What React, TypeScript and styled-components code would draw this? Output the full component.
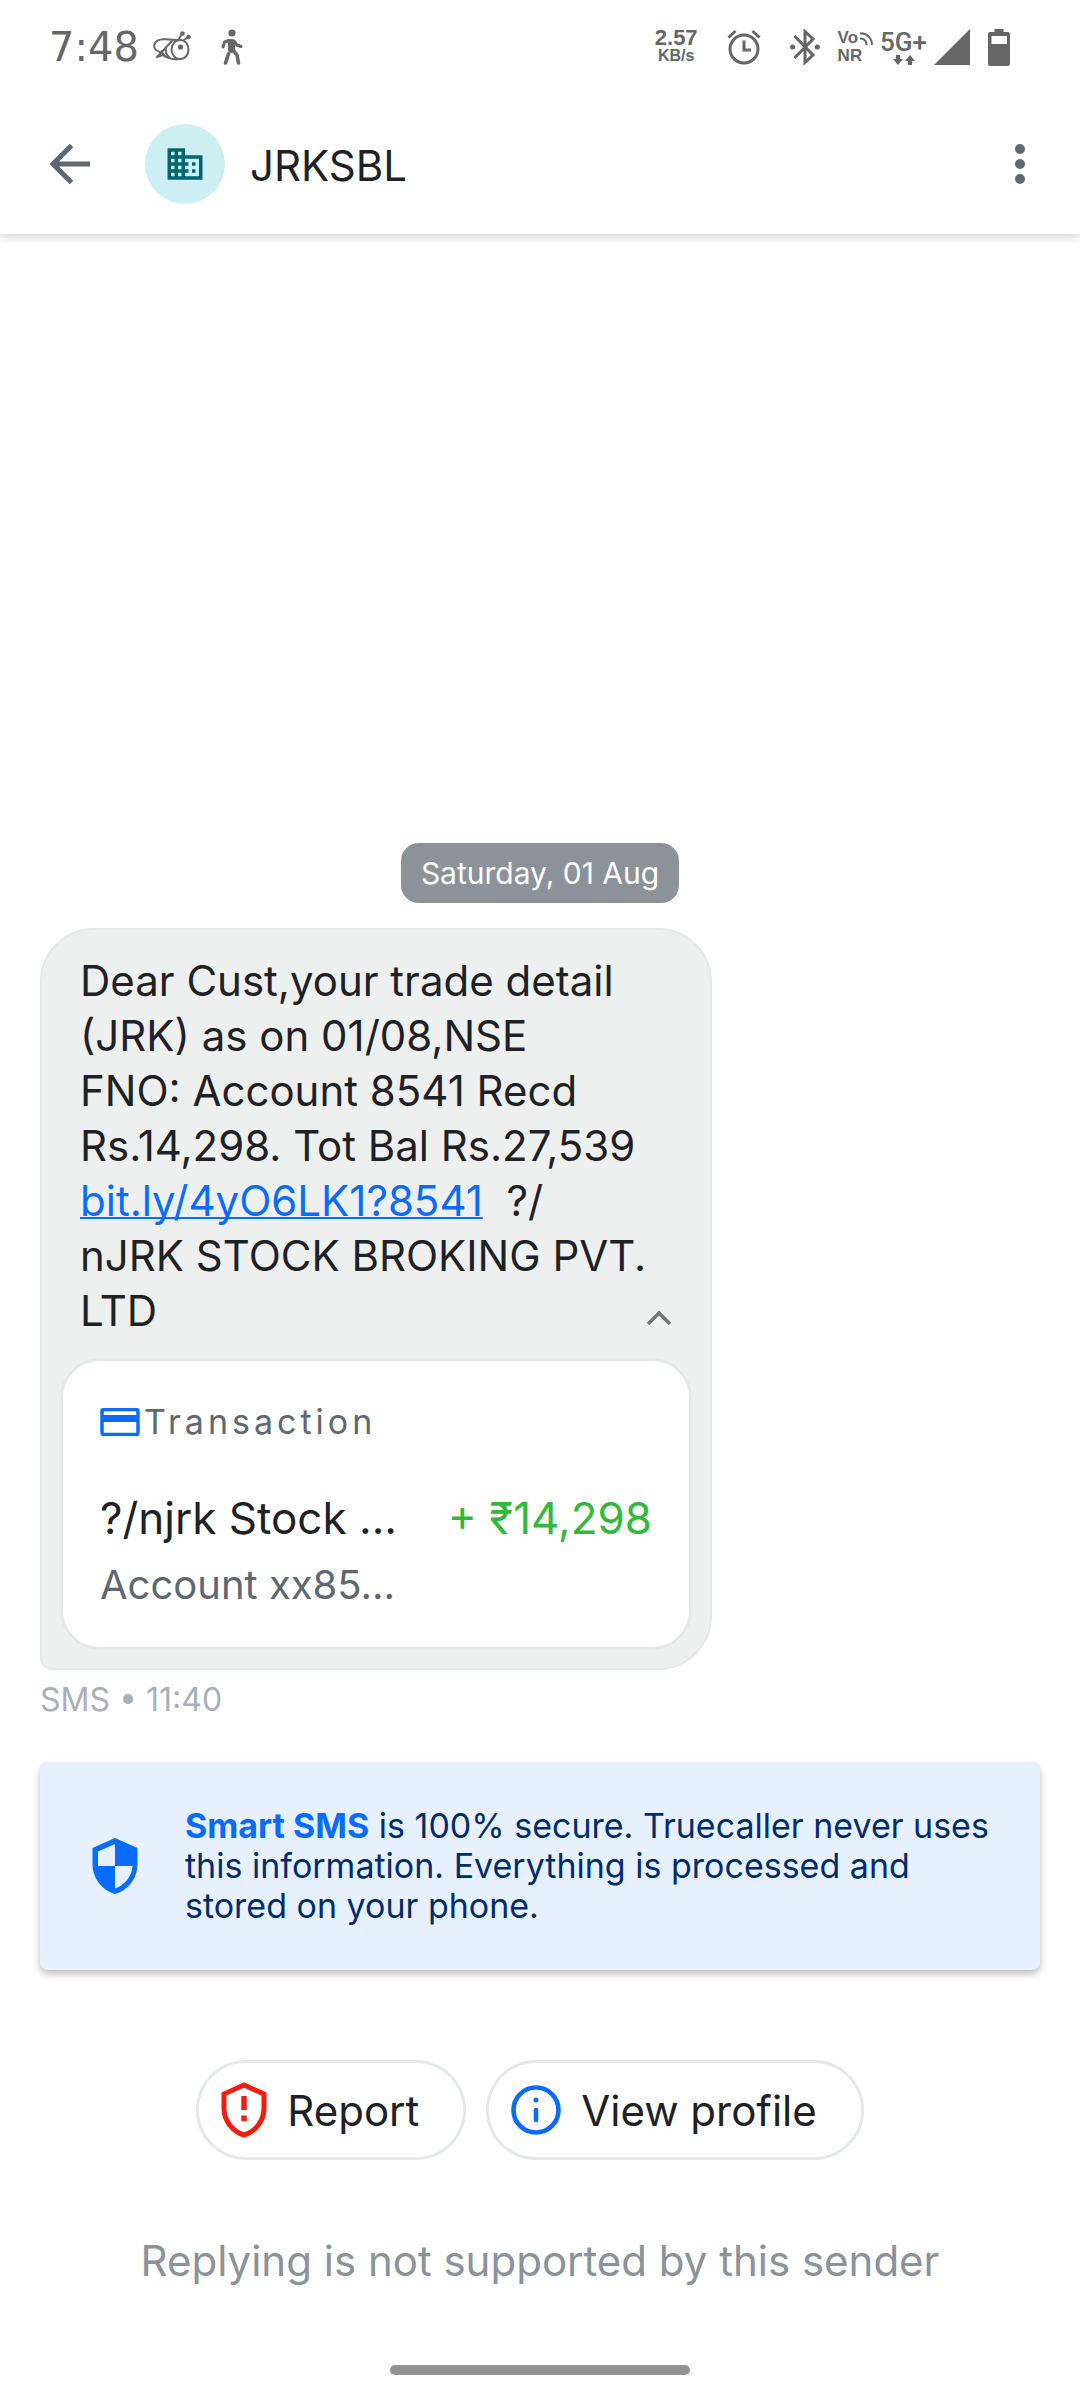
import React from "react";
import styled, { createGlobalStyle } from "styled-components";

const color = {
  text: "#1f2125",
  muted: "#616770",
  hint: "#8c929a",
  faint: "#abafb7",
  status: "#666666",
  blue: "#0a6cff",
  navy: "#002c6b",
  green: "#32b93c",
  red: "#f01e0f",
  bubble: "#eef0f0",
  line: "#e5e8e8",
};

const GlobalStyle = createGlobalStyle`
  *, *::before, *::after { box-sizing: border-box; }
  body {
    margin: 0;
    background: #ffffff;
    color: ${color.text};
    font-family: Inter, "Noto Sans", sans-serif;
  }
  svg { display: block; flex: none; }
`;

const Screen = styled.div`
  min-height: 100vh;
  display: flex;
  flex-direction: column;
`;

const TopBar = styled.div`
  background: #ffffff;
  box-shadow: 0 2px 10px rgba(0, 0, 0, 0.2);
`;

const StatusBar = styled.div`
  height: 94px;
  padding: 0 70px 0 49px;
  display: flex;
  align-items: center;
  justify-content: space-between;
  color: ${color.status};
`;

const StatusGroup = styled.div<{ $gap: number }>`
  display: flex;
  align-items: center;
  gap: ${(p) => p.$gap}px;
`;

const Clock = styled.span`
  font-family: "DejaVu Sans", sans-serif;
  font-size: 40px;
  line-height: 48px;
`;

const Stack = styled.div`
  display: flex;
  flex-direction: column;
  align-items: center;
`;

const Tiny = styled.span<{ $size: number }>`
  display: flex;
  align-items: center;
  gap: 2px;
  font-family: "Liberation Sans", Arial, sans-serif;
  font-weight: 700;
  font-size: ${(p) => p.$size}px;
  line-height: 18px;
`;

const Network = styled.span`
  font-family: Roboto, sans-serif;
  font-weight: 500;
  font-size: 26px;
  line-height: 26px;
`;

const Header = styled.header`
  height: 140px;
  padding: 0 40px 0 46px;
  display: flex;
  align-items: center;
`;

const IconButton = styled.button`
  border: 0;
  padding: 0;
  background: none;
  color: ${color.muted};
  cursor: pointer;
`;

const Avatar = styled.div`
  width: 80px;
  height: 80px;
  margin: 0 25px 0 51px;
  border-radius: 50%;
  background: #cdeef3;
  color: #006672;
  display: grid;
  place-items: center;
`;

const Title = styled.h1`
  flex: 1;
  margin: 0;
  padding-top: 4px;
  font-size: 42px;
  line-height: 56px;
  font-weight: 400;
`;

const Thread = styled.main`
  flex: 1;
  padding: 40px 40px 0;
  display: flex;
  flex-direction: column;
  justify-content: flex-end;
`;

const DatePill = styled.time`
  align-self: center;
  padding: 0 20px;
  border-radius: 18px;
  background: ${color.hint};
  color: #ffffff;
  font-size: 30px;
  line-height: 60px;
`;

const Bubble = styled.article`
  width: 672px;
  max-width: 100%;
  margin-top: 25px;
  padding: 23px 18px 18px;
  border: 2px solid ${color.line};
  border-radius: 54px 54px 54px 12px;
  background: ${color.bubble};
`;

const MessageRow = styled.div`
  padding: 0 20px;
  display: flex;
  align-items: flex-end;
  justify-content: space-between;
`;

const Message = styled.p`
  margin: 0;
  font-size: 42px;
  line-height: 55px;
  white-space: nowrap;
`;

const Link = styled.a`
  color: ${color.blue};
  text-decoration: underline;
  text-decoration-thickness: 2px;
  text-decoration-skip-ink: none;
`;

const Card = styled.section`
  margin-top: 20px;
  padding: 41px 37px 38px;
  border: 3px solid ${color.line};
  border-radius: 40px;
  background: #ffffff;
`;

const CardLabel = styled.h2`
  margin: 0 0 48px;
  display: flex;
  align-items: center;
  gap: 4px;
  color: ${color.muted};
  font-size: 34px;
  line-height: 40px;
  font-weight: 400;
  letter-spacing: 4px;
`;

const CardRow = styled.div`
  display: flex;
  justify-content: space-between;
  font-size: 44px;
  line-height: 56px;
`;

const Amount = styled.span`
  color: ${color.green};
`;

const Account = styled.p`
  margin: 15px 0 0;
  color: ${color.muted};
  font-size: 40px;
  line-height: 48px;
`;

const Meta = styled.p`
  margin: 10px 0 42px;
  color: ${color.faint};
  font-size: 32px;
  line-height: 40px;
`;

const Notice = styled.aside`
  padding: 44px 40px 44px 52px;
  display: flex;
  align-items: center;
  gap: 47px;
  border-radius: 8px;
  background: #e6f0ff;
  box-shadow: 0 4px 7px rgba(0, 0, 0, 0.26);
  color: ${color.navy};
  font-size: 34px;
  line-height: 40px;

  p { margin: 0; }
  strong { color: ${color.blue}; }
`;

const Actions = styled.div`
  margin: 90px 20px 77px 0;
  display: flex;
  justify-content: center;
  gap: 20px;
`;

const Action = styled.button`
  height: 100px;
  padding: 0 44px 0 22px;
  display: flex;
  align-items: center;
  gap: 20px;
  border: 3px solid ${color.line};
  border-radius: 50px;
  background: #ffffff;
  color: ${color.text};
  font: inherit;
  font-size: 42px;
  cursor: pointer;
`;

const Footer = styled.footer`
  padding-bottom: 25px;
  display: flex;
  flex-direction: column;
  align-items: center;
  gap: 80px;
  color: ${color.hint};
  font-size: 42px;
  line-height: 48px;

  p { margin: 0; }
`;

const HomeBar = styled.div`
  width: 300px;
  height: 10px;
  border-radius: 5px;
  background: #939393;
`;

const Bee = () => (
  <svg width="38" height="32" viewBox="0 0 38 32" fill="none" stroke="currentColor" strokeWidth="2" strokeLinecap="round" strokeLinejoin="round">
    <path d="M24 9C14 8 5 7 2 12c-2 4 0 8 5 9" />
    <path d="M19 10 4 26l6-2c4 3 10 5 17 4M9 20c0 2 1 4 3 5M13 16c-1 5 0 8 4 11" />
    <path d="M27 9c5 0 8.500 4 8.500 9.500S32 28 27 28s-8.500-4.500-8.500-9.500S22 9 27 9Z" />
    <path d="m26 8 3-5M31 9l4-3" />
    <circle cx="27.500" cy="16" r="2.600" fill="currentColor" stroke="none" />
    <circle cx="29.500" cy="2.500" r="1.300" fill="currentColor" />
    <circle cx="35.500" cy="6" r="1.300" fill="currentColor" />
  </svg>
);

const Walker = () => (
  <svg width="22" height="36" viewBox="0 0 22 36" fill="none" stroke="currentColor" strokeLinecap="round" strokeLinejoin="round">
    <circle cx="11" cy="4" r="3.600" fill="currentColor" stroke="none" />
    <path d="M10.500 13.500v7" strokeWidth="7" />
    <path d="M8 11.500 3.500 13 2 18M13 12l3 4 4 1.500" strokeWidth="3" />
    <path d="M7.500 25 4.500 34M12 21l4 5 1.500 8" strokeWidth="3.600" />
  </svg>
);

const Alarm = () => (
  <svg width="34" height="36" viewBox="0 0 34 36" fill="none" stroke="currentColor" strokeWidth="3">
    <circle cx="17" cy="20" r="14" />
    <path d="M17 11.500V21h7M1.500 8.500 8.500 2M32.500 8.500 25.500 2" />
  </svg>
);

const BluetoothIcon = () => (
  <svg width="30" height="36" viewBox="0 0 30 36" fill="none" stroke="currentColor" strokeWidth="3">
    <path d="m4.500 7 18.500 19-8 7.500v-31l8 7.500L4.500 29" />
    <circle cx="2.600" cy="18" r="2.500" fill="currentColor" stroke="none" />
    <circle cx="27.400" cy="18" r="2.500" fill="currentColor" stroke="none" />
  </svg>
);

const Waves = () => (
  <svg width="13" height="13" viewBox="0 0 13 13" fill="none" stroke="currentColor" strokeWidth="2">
    <path d="M0 1.200C7 1 12 6 12 13M0 6.500c4 0 6.500 2.500 6.500 6.500" />
  </svg>
);

const DataArrows = () => (
  <svg width="22" height="10" viewBox="0 0 22 10" fill="currentColor">
    <path d="M3 0h4v4h3L5 10 0 4h3zM15 10h4V6h3l-5-6-5 6h3z" />
  </svg>
);

const Signal = () => (
  <svg width="36" height="36" viewBox="0 0 36 36" fill="currentColor">
    <path d="M36 0v36H0z" />
  </svg>
);

const Battery = () => (
  <svg width="22" height="37" viewBox="0 0 22 37" fill="currentColor" fillRule="evenodd">
    <path d="M6.500 0h9v3H20a2 2 0 0 1 2 2v30a2 2 0 0 1-2 2H2a2 2 0 0 1-2-2V5a2 2 0 0 1 2-2h4.500zM3.500 7v8h15.500V7z" />
  </svg>
);

const BackArrow = () => (
  <svg width="48" height="48" viewBox="0 0 48 48" fill="none" stroke="currentColor" strokeWidth="5">
    <path d="M44 24H8M25.500 5.500 7 24l18.500 18.500" />
  </svg>
);

const More = () => (
  <svg width="40" height="48" viewBox="0 0 40 48" fill="currentColor">
    <circle cx="20" cy="9" r="5" />
    <circle cx="20" cy="24" r="5" />
    <circle cx="20" cy="39" r="5" />
  </svg>
);

const Building = () => (
  <svg width="42" height="42" viewBox="0 0 24 24" fill="currentColor">
    <path d="M12 7V3H2v18h20V7H12zM6 19H4v-2h2v2zm0-4H4v-2h2v2zm0-4H4V9h2v2zm0-4H4V5h2v2zm4 12H8v-2h2v2zm0-4H8v-2h2v2zm0-4H8V9h2v2zm0-4H8V5h2v2zm10 12h-8v-2h2v-2h-2v-2h2v-2h-2V9h8v10zm-2-8h-2v2h2v-2zm0 4h-2v2h2v-2z" />
  </svg>
);

const ChevronUp = () => (
  <svg width="26" height="28" viewBox="0 0 26 28" fill="none" stroke="#757575" strokeWidth="3.500">
    <path d="M2 14 13 3l11 11" />
  </svg>
);

const CreditCard = () => (
  <svg width="40" height="28" viewBox="0 0 40 28" fill="none" stroke={color.blue}>
    <rect x="2" y="1.500" width="36" height="25" rx="2" strokeWidth="3.500" />
    <path d="M2 10.500h36" strokeWidth="7" />
  </svg>
);

const SecureShield = () => (
  <svg width="46" height="56" viewBox="0 0 46 56">
    <path d="M23 0 45.500 10v16C45.500 40 36 52.500 23 56 10 52.500.5 40 .5 26V10z" fill={color.blue} />
    <path d="M23 6v22H6V13.500zM23 28h17.500C40 38 33 47 23 50.500z" fill="#e6f0ff" />
  </svg>
);

const AlertShield = () => (
  <svg width="46" height="56" viewBox="0 0 46 56" fill="none" stroke={color.red} strokeWidth="5">
    <path d="M23 3 43 12v14.500C43 38 35 49.500 23 53 11 49.500 3 38 3 26.500V12z" />
    <path d="M23 14v14M23 33.500v5.500" strokeWidth="5.500" />
  </svg>
);

const InfoIcon = () => (
  <svg width="50" height="50" viewBox="0 0 50 50" fill="none" stroke={color.blue} strokeWidth="4.600">
    <circle cx="25" cy="25" r="22.500" />
    <path d="M25 25v10" strokeLinecap="round" />
    <circle cx="25" cy="15" r="2.500" fill={color.blue} stroke="none" />
  </svg>
);

export default function App() {
  return (
    <Screen>
      <GlobalStyle />
      <TopBar>
        <StatusBar>
          <StatusGroup $gap={14}>
            <Clock>7:48</Clock>
            <StatusGroup $gap={30}>
              <Bee />
              <Walker />
            </StatusGroup>
          </StatusGroup>
          <StatusGroup $gap={18}>
            <StatusGroup $gap={29}>
              <Stack>
                <Tiny $size={22}>2.57</Tiny>
                <Tiny $size={16}>KB/s</Tiny>
              </Stack>
              <Alarm />
              <BluetoothIcon />
            </StatusGroup>
            <StatusGroup $gap={7}>
              <div>
                <Tiny $size={17}>Vo<Waves /></Tiny>
                <Tiny $size={17}>NR</Tiny>
              </div>
              <Stack>
                <Network>5G+</Network>
                <DataArrows />
              </Stack>
              <Signal />
            </StatusGroup>
            <Battery />
          </StatusGroup>
        </StatusBar>

        <Header>
          <IconButton aria-label="Back"><BackArrow /></IconButton>
          <Avatar><Building /></Avatar>
          <Title>JRKSBL</Title>
          <IconButton aria-label="More options"><More /></IconButton>
        </Header>
      </TopBar>

      <Thread>
        <DatePill>Saturday, 01 Aug</DatePill>
        <Bubble>
          <MessageRow>
            <Message>
              Dear Cust,your trade detail<br />
              (JRK) as on 01/08,NSE<br />
              FNO: Account 8541 Recd<br />
              Rs.14,298. Tot Bal Rs.27,539<br />
              <Link href="#">bit.ly/4yO6LK1?8541</Link>&nbsp; ?/<br />
              nJRK STOCK BROKING PVT.<br />
              LTD
            </Message>
            <IconButton aria-label="Collapse details"><ChevronUp /></IconButton>
          </MessageRow>
          <Card>
            <CardLabel><CreditCard />Transaction</CardLabel>
            <CardRow>
              <span>?/njrk Stock ...</span>
              <Amount>+ ₹14,298</Amount>
            </CardRow>
            <Account>Account xx85...</Account>
          </Card>
        </Bubble>
        <Meta>SMS • 11:40</Meta>
        <Notice>
          <SecureShield />
          <p>
            <strong>Smart SMS</strong> is 100% secure. Truecaller never uses
            this information. Everything is processed and stored on your phone.
          </p>
        </Notice>
        <Actions>
          <Action><AlertShield />Report</Action>
          <Action><InfoIcon />View profile</Action>
        </Actions>
      </Thread>

      <Footer>
        <p>Replying is not supported by this sender</p>
        <HomeBar />
      </Footer>
    </Screen>
  );
}
